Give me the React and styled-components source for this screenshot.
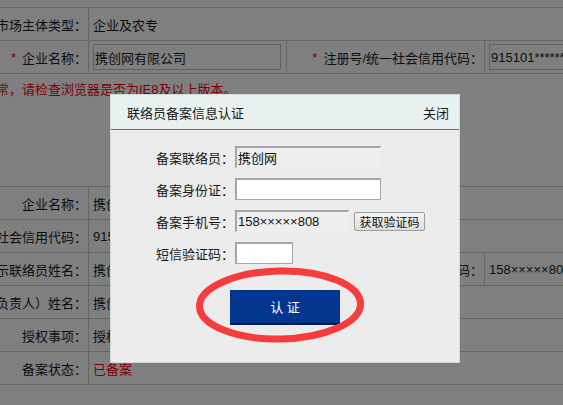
import styled, { createGlobalStyle } from "styled-components";

const GlobalStyle = createGlobalStyle`
  html, body {
    margin: 0;
    padding: 0;
    background: #fff;
    overflow: hidden;
  }
  body {
    font-family: "Liberation Sans", "Noto Sans CJK SC", sans-serif;
    font-size: 13px;
    color: #1a1a1a;
  }
  * { box-sizing: border-box; }
`;

const upperRows = [
  [{ label: "市场主体类型：" }, { text: "企业及农专", span: 3 }],
  [
    { label: "企业名称：", required: true },
    { input: "携创网有限公司" },
    { label: "注册号/统一社会信用代码：", required: true },
    { input: "915101*******" },
  ],
];

const lowerRows = [
  [{ label: "企业名称：" }, { text: "携创网有限公司", span: 3 }],
  [{ label: "统一社会信用代码：" }, { text: "915101*******", span: 3 }],
  [
    { label: "公示联络员姓名：" },
    { text: "携创网" },
    { label: "联络员手机号码：" },
    { text: "158×××××808" },
  ],
  [{ label: "法定代表人（负责人）姓名：" }, { text: "携创网", span: 3 }],
  [{ label: "授权事项：" }, { text: "授权联络员办理企业信息公示", span: 3 }],
  [{ label: "备案状态：" }, { text: "已备案", span: 3, red: true }],
];

function InfoRows({ rows }) {
  return rows.map((row, i) =>
    row.map((cell, j) => {
      const key = `${i}-${j}`;
      if (cell.label) {
        return (
          <Cell key={key} $label>
            {cell.required && <Star>*</Star>}
            {cell.label}
          </Cell>
        );
      }
      if (cell.input) {
        return (
          <Cell key={key}>
            <PageInput readOnly value={cell.input} />
          </Cell>
        );
      }
      return (
        <Cell key={key} $span={cell.span} $red={cell.red}>
          {cell.text}
        </Cell>
      );
    })
  );
}

export default function App() {
  return (
    <>
      <GlobalStyle />
      <Page>
        <InfoTable>
          <InfoRows rows={upperRows} />
        </InfoTable>
        <Notice>页面显示异常，请检查浏览器是否为IE8及以上版本。</Notice>
        <InfoTable $top={86}>
          <InfoRows rows={lowerRows} />
        </InfoTable>
      </Page>

      <Overlay />

      <Dialog>
        <DialogHeader>
          <span>联络员备案信息认证</span>
          <CloseLink>关闭</CloseLink>
        </DialogHeader>
        <DialogBody>
          <Form>
            <FormLabel>备案联络员：</FormLabel>
            <FieldRow>
              <Field readOnly $readonly $width={146} value="携创网" />
            </FieldRow>

            <FormLabel>备案身份证：</FormLabel>
            <FieldRow>
              <Field $width={146} defaultValue="" />
            </FieldRow>

            <FormLabel>备案手机号：</FormLabel>
            <FieldRow>
              <Field readOnly $readonly $width={114} value="158×××××808" />
              <CodeButton type="button">获取验证码</CodeButton>
            </FieldRow>

            <FormLabel>短信验证码：</FormLabel>
            <FieldRow>
              <Field $width={58} defaultValue="" />
            </FieldRow>
          </Form>

          <SubmitButton type="button">认 证</SubmitButton>

          <Circle width="168" height="76" viewBox="0 0 168 76">
            <ellipse
              cx="84"
              cy="38"
              rx="80.5"
              ry="34"
              fill="none"
              stroke="#f63c3c"
              strokeWidth="7"
              transform="rotate(-1 84 38)"
            />
          </Circle>
        </DialogBody>
      </Dialog>
    </>
  );
}

const Page = styled.main`
  width: 820px;
  margin-left: -72px;
  padding-top: 7px;
`;

const InfoTable = styled.div`
  display: grid;
  grid-template-columns: 161px 198px 198px 263px;
  border-top: 1px solid #cdcdcd;
  margin-top: ${({ $top }) => $top || 0}px;
`;

const Cell = styled.div`
  grid-column: span ${({ $span }) => $span || 1};
  display: flex;
  align-items: center;
  justify-content: ${({ $label }) => ($label ? "flex-end" : "flex-start")};
  height: 33px;
  padding: ${({ $label }) => ($label ? "0 1px 0 0" : "0 0 0 4px")};
  border-bottom: 1px solid #cdcdcd;
  border-right: 1px solid #cdcdcd;
  color: ${({ $red }) => ($red ? "#ff0000" : "#1a1a1a")};
  white-space: nowrap;
  overflow: hidden;
`;

const Star = styled.span`
  color: #ff0000;
  margin-right: 6px;
`;

const PageInput = styled.input`
  width: 188px;
  height: 26px;
  padding: 0 1px;
  border: 1px solid #c4c4c4;
  background: #fff;
  font: inherit;
  color: #1a1a1a;
  outline: none;
`;

const Notice = styled.p`
  margin: 6px 0 0;
  padding-left: 3px;
  height: 20px;
  line-height: 20px;
  color: #ff0000;
  white-space: nowrap;
`;

const Overlay = styled.div`
  position: fixed;
  inset: 0;
  background: rgba(0, 0, 0, 0.5);
`;

const Dialog = styled.section`
  position: fixed;
  left: 110px;
  top: 94px;
  width: 350px;
  height: 269px;
  border: 1px solid #cbdad6;
  background: #ebeceb;
`;

const DialogHeader = styled.header`
  display: flex;
  align-items: center;
  justify-content: space-between;
  height: 35px;
  padding: 0 10px 0 16px;
  background: #e9f1f1;
  border-bottom: 1px solid #6e6e6e;
  color: #1a1a1a;
`;

const CloseLink = styled.span`
  cursor: pointer;
`;

const DialogBody = styled.div`
  display: flex;
  flex-direction: column;
  align-items: center;
  padding-top: 16px;
`;

const Form = styled.div`
  display: grid;
  grid-template-columns: 123px 1fr;
  column-gap: 1px;
  row-gap: 10px;
  width: 100%;
  align-items: center;
`;

const FormLabel = styled.label`
  text-align: right;
  white-space: nowrap;
  color: #1a1a1a;
`;

const FieldRow = styled.div`
  display: flex;
  align-items: center;
  gap: 5px;
`;

const Field = styled.input`
  width: ${({ $width }) => $width}px;
  height: 22px;
  padding: 0 1px;
  font: inherit;
  color: #111;
  outline: none;
  border: 1px solid #a6a6a6;
  border-width: 2px 1px 1px 2px;
  background: ${({ $readonly }) => ($readonly ? "#eeeeee" : "#ffffff")};
  border-color: ${({ $readonly }) =>
    $readonly ? "#a6a6a6 #eeeeee #eeeeee #a6a6a6" : "#a6a6a6"};
`;

const CodeButton = styled.button`
  width: 71px;
  height: 19px;
  padding: 0;
  font-family: inherit;
  font-size: 12px;
  color: #111;
  background: linear-gradient(#f4f4f4, #dedede);
  border: 1px solid #9c9c9c;
  border-radius: 2px;
`;

const SubmitButton = styled.button`
  margin-top: 26px;
  width: 110px;
  height: 35px;
  padding: 0;
  font-family: inherit;
  font-size: 13px;
  color: #fff;
  background: #03368e;
  border: none;
  border-bottom: 2px solid #001a4a;
  cursor: pointer;
`;

const Circle = styled.svg`
  position: absolute;
  left: 85px;
  top: 172px;
  pointer-events: none;
`;
